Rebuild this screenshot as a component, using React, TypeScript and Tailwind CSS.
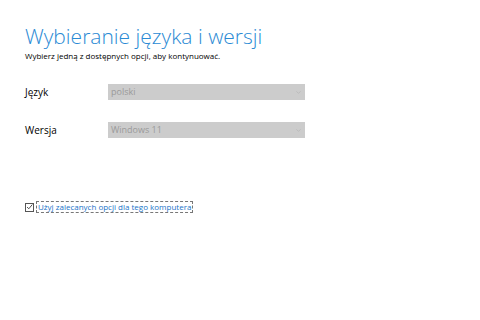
import { ChevronDown } from 'lucide-react';

type SelectRowProps = {
  label: string;
  value: string;
};

const SelectRow = ({ label, value }: SelectRowProps) => {
  return (
    <div className="flex items-center h-[16px]">
      <p className="w-[83px] text-[10px] text-black">{label}</p>
      <div className="flex items-center justify-between w-[197px] h-[16px] bg-[#cccccc] px-[3px]">
        <span className="text-[9px] text-[#9a9a9a]">{value}</span>
        <ChevronDown className="w-[7px] h-[7px] text-[#b0b0b0]" strokeWidth={2} />
      </div>
    </div>
  );
};

const App = () => {
  return (
    <div
      className="w-[480px] h-[320px] bg-white pl-[25px] pt-[22px] overflow-hidden"
      style={{ fontFamily: '"Open Sans", "Noto Sans", sans-serif' }}
    >
      <h1 className="text-[21px] font-light text-[#2a8ad4] leading-[28px]">
        Wybieranie języka i wersji
      </h1>
      <p className="text-[8px] text-black leading-[12px]">
        Wybierz jedną z dostępnych opcji, aby kontynuować.
      </p>

      <div className="flex flex-col gap-[22px] mt-[22px]">
        <SelectRow label="Język" value="polski" />
        <SelectRow label="Wersja" value="Windows 11" />
      </div>

      <div className="flex items-center gap-[2px] mt-[63px]">
        <div className="w-[9px] h-[9px] border border-[#555] flex items-center justify-center">
          <svg viewBox="0 0 10 10" className="w-[8px] h-[8px]">
            <path d="M1.5 5 L4 7.5 L9 1.5" fill="none" stroke="#333" strokeWidth="1.2" />
          </svg>
        </div>
        <span className="text-[8px] text-[#1a73c8] leading-[10px] px-[1px] border border-dashed border-[#777]">
          Użyj zalecanych opcji dla tego komputera
        </span>
      </div>
    </div>
  );
};

export default App;
